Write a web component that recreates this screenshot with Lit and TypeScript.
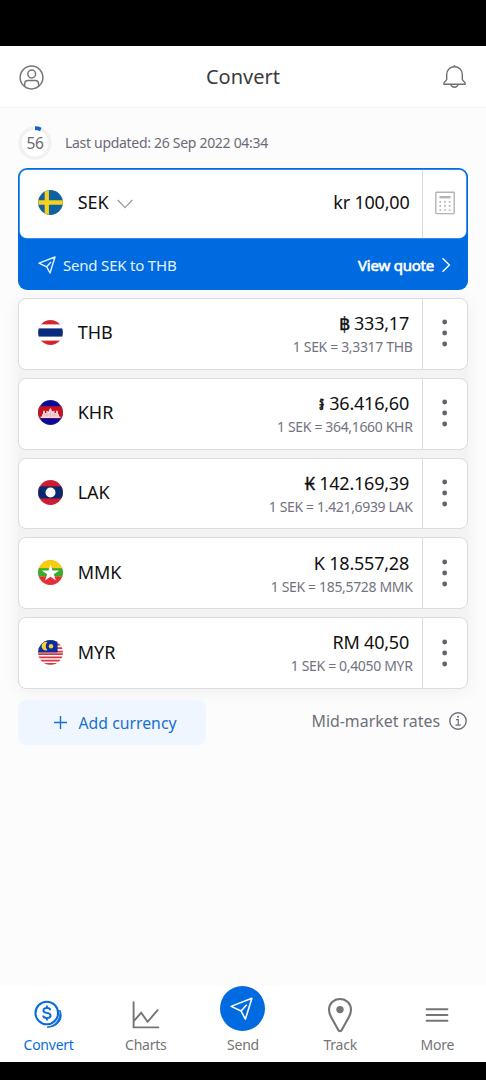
import { LitElement, html, svg, css, TemplateResult } from "lit";
import { customElement, property } from "lit/decorators.js";

interface Currency {
  code: string;
  symbol: string;
  amount: string;
  rate: string;
}

const CURRENCIES: Currency[] = [
  { code: "THB", symbol: "฿", amount: "333,17", rate: "3,3317" },
  { code: "KHR", symbol: "៛", amount: "36.416,60", rate: "364,1660" },
  { code: "LAK", symbol: "₭", amount: "142.169,39", rate: "1.421,6939" },
  { code: "MMK", symbol: "K", amount: "18.557,28", rate: "185,5728" },
  { code: "MYR", symbol: "RM", amount: "40,50", rate: "0,4050" },
];

const EMPHASISED_SYMBOLS = ["฿", "៛", "₭"];

const FLAGS: Record<string, TemplateResult> = {
  SEK: svg`<rect width="25" height="25" fill="#0f62a0"/>
    <path d="M0 12.5H25M8.8 0V25" stroke="#f6d01f" stroke-width="4.3"/>`,
  THB: svg`<rect width="25" height="25" fill="#fff"/>
    <rect width="25" height="4.4" fill="#d8232f"/><rect y="20.6" width="25" height="4.4" fill="#d8232f"/>
    <rect y="8.4" width="25" height="8.2" fill="#0a2a80"/>`,
  KHR: svg`<rect width="25" height="25" fill="#0a0a98"/>
    <rect y="6.2" width="25" height="12.2" fill="#c8101c"/>
    <path d="M2.6 18V16.4H4V14.2H5V11.6L6 10.2L7 11.6V13H8.4V11.2L9 10.4L9.6 11.2H11V10L12.4 8L13.8 10V11.2H15.4L16 10.4L16.6 11.2V13H18V11.6L19 10.2L20 11.6V14.2H21V16.4H22.4V18Z" fill="#f8d4d8"/>
    <path d="M5.5 15H19.5M9 12.8V17M12.5 12V17M16 12.8V17" stroke="#ea98a2" stroke-width=".5" fill="none"/>`,
  LAK: svg`<rect width="25" height="25" fill="#cf1a31"/>
    <rect y="6.4" width="25" height="12" fill="#08296b"/><circle cx="12.5" cy="12.5" r="5" fill="#fff"/>`,
  MMK: svg`<rect width="25" height="25" fill="#fecb0a"/>
    <rect y="8.2" width="25" height="8.4" fill="#37ac30"/><rect y="16.6" width="25" height="8.4" fill="#e92c3a"/>
    <path d="M12.5 4.2L14.5 10.4H21.2L15.8 14.2L17.9 20.6L12.5 16.7L7.1 20.6L9.2 14.2L3.8 10.4H10.5Z" fill="#fff"/>`,
  MYR: svg`<rect width="25" height="25" fill="#fff"/>
    <path d="M0 1H25M0 4.6H25M0 8.2H25M0 11.6H25M0 14.2H25M0 17.4H25M0 20.6H25M0 23.8H25" stroke="#dc3540" stroke-width="1.7"/>
    <rect width="19.6" height="12.4" fill="#0b2d9e"/>
    <path d="M9.4 2.2A4.3 4.3 0 1 0 9.4 10.2A5.6 5.6 0 0 1 9.4 2.2Z" fill="#f3d33c"/>
    <circle cx="13" cy="6.2" r="2.2" fill="#f3d33c"/>`,
};

const planePath = "M1 7.2L17 1L12 17L8.7 10.8Z M8.7 10.8L13 6";

@customElement("flag-badge")
export class FlagBadge extends LitElement {
  @property() code = "SEK";

  static styles = css`
    :host { display: block; width: 25px; height: 25px; flex: none; }
    .flag { display: block; width: 25px; height: 25px; }
  `;

  render() {
    return html`<svg class="flag" viewBox="0 0 25 25">
      <defs><clipPath id="round"><circle cx="12.5" cy="12.5" r="12.4" /></clipPath></defs>
      <g clip-path="url(#round)">${FLAGS[this.code]}</g>
      <circle cx="12.5" cy="12.5" r="12.2" fill="none" stroke="#8a8a8a" stroke-opacity=".35" stroke-width=".5" />
    </svg>`;
  }
}

@customElement("currency-card")
export class CurrencyCard extends LitElement {
  @property({ attribute: false }) currency!: Currency;

  static styles = css`
    :host {
      box-sizing: border-box;
      display: flex;
      height: 71.8px;
      background: #fff;
      border: 1px solid #dcdcde;
      border-radius: 8px;
    }
    .name { display: flex; align-items: center; padding: 0 0 2px 19.2px; flex: 1; }
    .code { margin-left: 14.5px; font-size: 18px; line-height: 24px; color: #111; padding-bottom: 1px; }
    .values { padding: 12.3px 9.5px 0 0; text-align: right; white-space: nowrap; }
    .amount { font-size: 18px; line-height: 24px; letter-spacing: -0.22px; color: #111; padding-right: 3.5px; }
    .strong { -webkit-text-stroke: 0.35px #111; }
    .rate { margin-top: 2px; font-size: 14px; line-height: 20px; letter-spacing: -0.34px; color: #73737f; }
    .menu {
      width: 44px;
      border-left: 1px solid #dcdcde;
      display: flex;
      align-items: center;
      justify-content: center;
    }
    .dots { display: block; width: 6px; height: 30px; margin: 0 1px 1px 0; fill: #62626f; }
  `;

  render() {
    const c = this.currency;
    const strong = EMPHASISED_SYMBOLS.includes(c.symbol) ? "strong" : "";
    return html`
      <div class="name"><flag-badge .code=${c.code}></flag-badge><span class="code">${c.code}</span></div>
      <div class="values">
        <div class="amount"><span class="symbol ${strong}">${c.symbol}</span> ${c.amount}</div>
        <div class="rate">1 SEK = ${c.rate} ${c.code}</div>
      </div>
      <div class="menu">
        <svg class="dots" viewBox="0 0 6 30">
          <circle cx="2.7" cy="4" r="2.4" /><circle cx="2.7" cy="15" r="2.4" /><circle cx="2.7" cy="26" r="2.4" />
        </svg>
      </div>
    `;
  }
}

@customElement("app-root")
export class AppRoot extends LitElement {
  static styles = css`
    :host {
      display: flex;
      flex-direction: column;
      height: 1080px;
      overflow: hidden;
      background: #fcfcfc;
      font-family: "Noto Sans", "Noto Sans CJK SC", sans-serif;
      white-space: nowrap;
    }
    svg { display: block; flex: none; fill: none; }
    .status { height: 46px; background: #000; flex: none; }
    .header {
      box-sizing: border-box;
      height: 62px;
      flex: none;
      display: grid;
      grid-template-columns: 1fr auto 1fr;
      align-items: center;
      padding: 1px 19px 0;
      background: #fff;
      border-bottom: 1.5px solid #f2f2f3;
    }
    .title { font-size: 20px; line-height: 28px; color: #3b3b3b; padding-bottom: 1px; }
    .bell { justify-self: end; }
    .main { flex: 1; padding: 18px 18px 0; }
    .updated { display: flex; align-items: center; height: 34px; }
    .timer { display: grid; place-items: center; width: 34px; height: 34px; }
    .timer > * { grid-area: 1 / 1; }
    .seconds { font-size: 15.6px; line-height: 20px; letter-spacing: -0.4px; color: #6b6b70; }
    .stamp { margin-left: 13px; font-size: 14px; line-height: 20px; letter-spacing: -0.3px; color: #6b6b78; }

    .base { box-sizing: border-box; margin-top: 7.5px; padding: 2px; border-radius: 9px; background: #006be0; height: 122.8px; }
    .basecard { display: flex; height: 68px; background: #fff; border-radius: 7px; box-shadow: 0 0 0 .6px #6fb1f5; }
    .pick { display: flex; align-items: center; flex: 1; padding: 0 0 2px 18.2px; }
    .code { margin: 0 8px 0 14.5px; font-size: 18px; line-height: 24px; color: #111; padding-bottom: 1px; }
    .drop { margin-top: 2px; }
    .value { padding: 20px 12.5px 0 0; font-size: 18px; line-height: 24px; letter-spacing: -0.2px; color: #111; }
    .calc { display: flex; align-items: center; justify-content: center; width: 43px; padding-bottom: 2px; border-left: 1px solid #dcdcde; }
    .quote { display: flex; align-items: center; height: 52px; padding: 1px 15px 0 18px; color: #fff; }
    .sendtext { margin-left: 7px; font-size: 15px; line-height: 20px; letter-spacing: -0.2px; flex: 1; color: #e4f1ff; }
    .viewtext { margin-right: 7px; font-size: 15px; line-height: 20px; letter-spacing: -0.22px; -webkit-text-stroke: 0.6px #fff; }

    .list {
      display: grid;
      gap: 8px;
      margin-top: 7.7px;
      border-radius: 8px;
      background: #f3f3f4;
      box-shadow: 0 2px 18px rgba(0, 0, 0, 0.06);
    }
    .foot { display: flex; justify-content: space-between; align-items: flex-start; margin-top: 11px; }
    .add {
      box-sizing: border-box;
      display: flex;
      align-items: center;
      width: 188px;
      height: 45px;
      padding: 1px 0 0 36px;
      border-radius: 8px;
      background: #f0f6ff;
      color: #1a6fd0;
      font-size: 15.8px;
      line-height: 22px;
    }
    .addlabel { margin-left: 11.5px; }
    .mid { display: flex; align-items: center; height: 43px; font-size: 15.9px; line-height: 22px; color: #6f6f7b; }
    .info { margin: 0 1px 0 9px; }

    .nav {
      flex: none;
      display: grid;
      grid-template-columns: repeat(5, 1fr);
      height: 77px;
      background: #fff;
    }
    .tab { display: flex; flex-direction: column; align-items: center; color: #757575; }
    .tab.active { color: #0a6bdc; }
    .glyph { box-sizing: border-box; display: flex; align-items: center; justify-content: center; height: 50px; padding-top: 9px; }
    .label { font-size: 14px; line-height: 20px; letter-spacing: -0.25px; }
    .bottom { height: 18px; background: #000; flex: none; }
  `;

  private tab(label: string, icon: TemplateResult, active = false) {
    return html`<div class="tab ${active ? "active" : ""}">
      <div class="glyph">${icon}</div>
      <div class="label">${label}</div>
    </div>`;
  }

  render() {
    return html`
      <div class="status"></div>
      <div class="header">
        <svg width="25" height="25" viewBox="0 0 25 25" stroke="#757575" stroke-width="1.5">
          <circle cx="12.5" cy="12.5" r="11.4" />
          <circle cx="12.7" cy="9" r="3.9" />
          <path d="M5.6 21.3V19.2Q5.6 15.6 9.2 15.6H16Q19.6 15.6 19.6 19.2V21.3" />
        </svg>
        <div class="title">Convert</div>
        <svg class="bell" width="25" height="26" viewBox="0 0 25 26" stroke="#6f6f6f" stroke-width="1.4" stroke-linejoin="round">
          <path d="M12.5 1V2.6M1.9 20.2V18.9L4.7 15.6V10.4C4.7 6 8 2.7 12.5 2.7S20.3 6 20.3 10.4V15.6L23.1 18.9V20.2Z" />
          <path d="M8.9 20.4A3.7 3.7 0 0 0 16.1 20.4" />
        </svg>
      </div>

      <div class="main">
        <div class="updated">
          <div class="timer">
            <svg width="34" height="34" viewBox="0 0 34 34">
              <circle cx="17" cy="17" r="15" fill="#fff" stroke="#f1f1f2" stroke-width="3.4" />
              <path d="M17 2.2A14.8 14.8 0 0 1 22.8 3.4" stroke="#0b66cc" stroke-width="3.8" />
            </svg>
            <span class="seconds">56</span>
          </div>
          <span class="stamp">Last updated: 26 Sep 2022 04:34</span>
        </div>

        <div class="base">
          <div class="basecard">
            <div class="pick">
              <flag-badge code="SEK"></flag-badge>
              <span class="code">SEK</span>
              <svg class="drop" width="16" height="10" viewBox="0 0 16 10" stroke="#9a9aa2" stroke-width="1.3"><path d="M.7 1L8 8.6L15.3 1" /></svg>
            </div>
            <div class="value">kr 100,00</div>
            <div class="calc">
              <svg width="20" height="24" viewBox="0 0 20 24" stroke="#b4b4b8">
                <rect x=".8" y="1.2" width="18.4" height="21.4" rx=".6" stroke-width="1.4" />
                <path d="M4.4 6.2H15.6" stroke-width="2.4" />
                <path d="M4.4 10.8H16M4.4 14.9H16M4.4 19H16" stroke-width="1.7" stroke-dasharray="1.7 3" />
              </svg>
            </div>
          </div>
          <div class="quote">
            <svg width="18" height="18" viewBox="0 0 18 18" stroke="#e4f1ff" stroke-width="1.4" stroke-linejoin="round"><path d=${planePath} /></svg>
            <span class="sendtext">Send SEK to THB</span>
            <span class="viewtext">View quote</span>
            <svg width="10" height="16" viewBox="0 0 10 16" stroke="#fff" stroke-width="1.4"><path d="M1.5 1.2L8.4 8L1.5 14.8" /></svg>
          </div>
        </div>

        <div class="list">
          ${CURRENCIES.map((c) => html`<currency-card .currency=${c}></currency-card>`)}
        </div>

        <div class="foot">
          <div class="add">
            <svg width="13" height="13" viewBox="0 0 13 13" stroke="#1a6fd0" stroke-width="1.4"><path d="M0 6.5H13M6.5 0V13" /></svg>
            <span class="addlabel">Add currency</span>
          </div>
          <div class="mid">
            Mid-market rates
            <svg class="info" width="18" height="18" viewBox="0 0 18 18" stroke="#6f6f7b" stroke-width="1.4">
              <circle cx="9" cy="9" r="8.2" />
              <path d="M7 7.7H9.3V13M6.4 13.2H11.8" stroke-width="1.2" />
              <circle cx="9" cy="4.8" r="1" fill="#6f6f7b" stroke="none" />
            </svg>
          </div>
        </div>
      </div>

      <div class="nav">
        ${this.tab("Convert", html`<svg width="30" height="30" viewBox="0 0 30 30" stroke="#0a6bdc" stroke-width="1.8">
          <circle cx="12.8" cy="13" r="11.3" stroke-width="2.1" />
          <path d="M16.2 10.2C16.2 8.7 14.8 8 12.9 8S9.4 8.8 9.4 10.4C9.4 14 16.6 11.8 16.6 15.5C16.6 17.2 15 18 12.9 18S9.2 17.2 9.2 15.6M12.9 5.6V8M12.9 18V20.4" stroke-width="1.9" />
          <path d="M25.8 10C30 17.6 24.6 27.6 13 27.2C21 26 27 20 25.8 10Z" fill="#0a6bdc" stroke-width=".9" stroke-linejoin="round" />
        </svg>`, true)}
        ${this.tab("Charts", html`<svg width="28" height="28" viewBox="0 0 28 28" stroke="#757575" stroke-width="1.9" stroke-linecap="round">
          <path d="M1.6 1.2V26.4H26.4M2 19.8L9.2 11.8L15.6 20.8L25.6 9.2" />
        </svg>`)}
        ${this.tab("Send", html`<svg width="45" height="57" viewBox="0 0 45 57">
          <circle cx="22.5" cy="22.5" r="22.5" fill="#006be0" />
          <g transform="translate(9.8 11) scale(1.3)"><path d=${planePath} stroke="#fff" stroke-width="1.2" stroke-linejoin="round" /></g>
        </svg>`)}
        ${this.tab("Track", html`<svg width="26" height="36" viewBox="0 0 26 36" stroke="#757575" stroke-width="2.1">
          <path d="M13 34.2C11.6 34.2 11.2 33 10.6 31.8L4.2 20.2C2.8 17.6 2 15.2 2 12.8C2 6.6 6.8 2 13 2S24 6.6 24 12.8C24 15.2 23.2 17.6 21.8 20.2L15.4 31.8C14.8 33 14.4 34.2 13 34.2Z" />
          <circle cx="13" cy="12.6" r="3.7" fill="#757575" stroke="none" />
        </svg>`)}
        ${this.tab("More", html`<svg width="24" height="16" viewBox="0 0 24 16" stroke="#757575" stroke-width="2" stroke-linecap="round">
          <path d="M1.6 2.2H22.4M1.6 8H22.4M1.6 13.8H22.4" />
        </svg>`)}
      </div>
      <div class="bottom"></div>
    `;
  }
}
